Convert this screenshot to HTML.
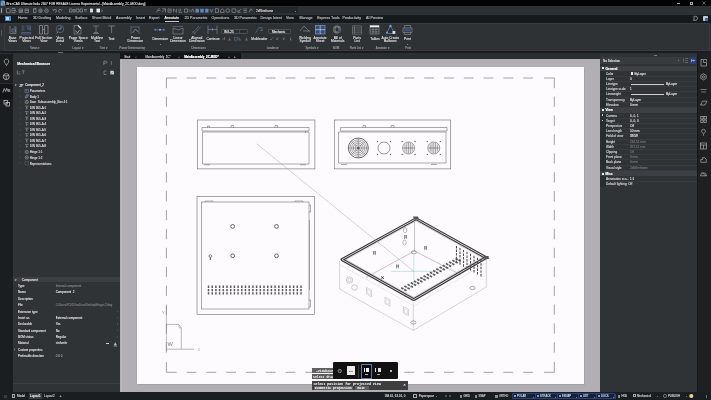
<!DOCTYPE html>
<html><head><meta charset="utf-8">
<style>
*{margin:0;padding:0;box-sizing:border-box}
html,body{width:711px;height:400px;overflow:hidden;background:#2e3134;font-family:"Liberation Sans",sans-serif;color:#c9cacc}
.a{position:absolute}
.t{position:absolute;white-space:nowrap;filter:blur(0.01px);text-shadow:0 0.28px 0 currentColor}
svg{position:absolute;left:0;top:0;overflow:visible}
</style></head><body>
<div class="a" style="left:0px;top:0px;width:711px;height:6px;background:#020303;"></div>
<div class="a" style="left:0px;top:6px;width:711px;height:8.5px;background:#2e3134;"></div>
<div class="a" style="left:0px;top:14.5px;width:711px;height:8px;background:#171a1c;"></div>
<div class="a" style="left:0px;top:22.5px;width:711px;height:28.5px;background:#2e3235;"></div>
<div class="a" style="left:0px;top:50.8px;width:711px;height:2.4px;background:#1a1d1f;"></div>
<div class="a" style="left:0px;top:53.5px;width:12.5px;height:338.5px;background:#1b1e1e;"></div>
<div class="a" style="left:9.5px;top:53.5px;width:3px;height:338.5px;background:#1c1d1f;"></div>
<div class="a" style="left:12.5px;top:53.5px;width:1px;height:338.5px;background:#36383b;"></div>
<div class="a" style="left:12.5px;top:53.5px;width:107.5px;height:338.5px;background:#2f3336;"></div>
<div class="a" style="left:120px;top:53.2px;width:577px;height:5.6px;background:#2b2e31;"></div>
<div class="a" style="left:120px;top:53.2px;width:121px;height:5.6px;background:#131517;"></div>
<div class="a" style="left:120px;top:59px;width:480px;height:333px;background:#b1aeb4;"></div>
<div class="a" style="left:135.5px;top:67.4px;width:1.5px;height:316px;background:#a9a6ab;"></div>
<div class="a" style="left:584px;top:68.5px;width:1.3px;height:316.5px;background:#a4a2a7;"></div>
<div class="a" style="left:138px;top:383.8px;width:447.3px;height:1.3px;background:#a4a2a7;"></div>
<div class="a" style="left:137px;top:67.4px;width:447px;height:316.4px;background:#fefbfe;"></div>
<div class="a" style="left:600px;top:53.5px;width:97px;height:338.5px;background:#2f3336;"></div>
<div class="a" style="left:697px;top:53.2px;width:14px;height:338.6px;background:#1e2022;"></div>
<div class="a" style="left:0px;top:391.8px;width:711px;height:8.2px;background:#1b1e20;"></div>
<svg width="711" height="400"><path d="M0.5 0.5h4.2l0.8 5.3h-5z" fill="#7ea3c8"/><path d="M1.5 1.5l2.5 3.5" stroke="#2d4f78" stroke-width="0.7"/></svg>
<div class="t" style="left:6.5px;top:2.90px;font-size:3.15px;line-height:3.15px;color:#d8d8d8;font-weight:normal;">BricsCAD Ultimate Italia 2507 FOR RESALE License Experimental - [MainAssembly_2C-MOD.dwg]</div>
<div class="a" style="left:676.5px;top:3px;width:3px;height:0.5px;background:#aaa;"></div>
<div class="a" style="left:689.5px;top:1.5px;width:3.2px;height:3.2px;border:0.5px solid #aaa;"></div>
<svg width="711" height="400"><path d="M702.5 1.5l3 3M705.5 1.5l-3 3" stroke="#bbb" stroke-width="0.5"/></svg>
<svg width="711" height="400"><g fill="none" stroke="#a9acb0" stroke-width="0.55"><rect x="1.2" y="8.3" width="0.6" height="4.5" fill="#a9acb0"/><path d="M6.5 8.5h2.5l1.2 1.2v3.1h-3.7z" /><path d="M12 8.5h3v4.3h-3zM13 10.5h2.5l1 1" /><path d="M19 9h3.5v3.5h-3.5zM19.5 10.5h2.5M19.5 11.5h2.5" /><path d="M25 9h3.5v3.5h-3.5zM25.5 10.5h2.5" /><path d="M33.5 8.5h2.5v4h-2.5zM34.3 9.5h1" /><circle cx="40.5" cy="10.7" r="1.8"/><circle cx="40.5" cy="10.7" r="0.8"/><circle cx="46.5" cy="10.7" r="1.8"/><path d="M45.5 10.7h2"/><path d="M53.5 10.5a1.5 1.5 0 1 1 1.5 1.8M53.5 10.5l-0.7 -1M53.5 10.5l1 -0.5" /><path d="M61.5 10.5a1.5 1.5 0 1 0 -1.5 1.8M61.5 10.5l0.7 -1" /><path d="M69.5 9h2.5v3h-2.5zM73 9.5h2v2.5h-2z" /><path d="M76 9h3v3h-3zM80 9h2.5v3h-2.5z" /><path d="M84 9.5h3M84 11h3" /></g><rect x="90" y="8.6" width="3" height="3.8" fill="#d9d9d9"/><rect x="96.5" y="8.6" width="3.5" height="3.8" fill="#f0f0f0"/><path d="M101.5 9.5l1 1.2-1 1.2" stroke="#aaa" stroke-width="0.5" fill="none"/></svg>
<svg width="711" height="400"><g fill="none" stroke="#a3a6aa" stroke-width="0.55"><path d="M156.5 12.3l2-3.5h1.5M158 10.5h2.5" /><path d="M162 12.3l3.5-3.5M162 8.8h3.5v3.5" /><path d="M168 9h3.2v3.2h-3.2zM169 10.5h1.5" /><path d="M173.5 12.3v-3.5l3 3.5v-3.5" /><path d="M179 8.8v3.5h3.2M180.5 8.8v2" /><path d="M184.5 9h3v3.2h-3zM188.5 9l1.5 1.5-1.5 1.5" /><path d="M191 12.3l1.6-3.5 1.6 3.5" /><rect x="215.5" y="8.8" width="3.2" height="3.6"/><path d="M220.5 12.4v-2l1.8-1.5 1.8 1.5v2z" /><circle cx="227.8" cy="10.6" r="1.8"/><rect x="232" y="8.8" width="3.8" height="3.6" rx="0.6"/><path d="M238 12.3l3-3.5M238 9.8v2.5h2.5" /><path d="M243.5 9h3.5M243.5 10.6h3.5M243.5 12.2h3.5" /><path d="M249 12.3l2-3.5 1.5 2" /></g><g fill="#5f86bf"><rect x="195.5" y="8.7" width="3.4" height="3.7" rx="0.5"/><rect x="200.3" y="8.7" width="3.4" height="3.7" rx="0.5"/><rect x="205.1" y="8.7" width="3.4" height="3.7" rx="0.5"/></g><path d="M210 9l1.5 3.3 1.5-3.3" stroke="#8fa5c8" stroke-width="0.55" fill="none"/></svg>
<div class="a" style="left:254.5px;top:7.4px;width:43px;height:5.9px;background:#24272a;border-radius:0.6px"></div>
<div class="t" style="left:256px;top:9.80px;font-size:3.0px;line-height:3.0px;color:#d2d2d2;font-weight:normal;">2dWireframe</div>
<div class="t" style="left:195px;width:200px;text-align:center;top:10.10px;font-size:2.3px;line-height:2.3px;color:#999;font-weight:normal;">▾</div>
<div class="t" style="left:18px;top:17.20px;font-size:3.6px;line-height:3.6px;color:#b2b4b7;font-weight:normal;">Home</div>
<div class="t" style="left:33px;top:17.20px;font-size:3.6px;line-height:3.6px;color:#b2b4b7;font-weight:normal;">3D Drafting</div>
<div class="t" style="left:56px;top:17.20px;font-size:3.6px;line-height:3.6px;color:#b2b4b7;font-weight:normal;">Modeling</div>
<div class="t" style="left:75px;top:17.20px;font-size:3.6px;line-height:3.6px;color:#b2b4b7;font-weight:normal;">Surface</div>
<div class="t" style="left:92px;top:17.20px;font-size:3.6px;line-height:3.6px;color:#b2b4b7;font-weight:normal;">Sheet Metal</div>
<div class="t" style="left:116px;top:17.20px;font-size:3.6px;line-height:3.6px;color:#b2b4b7;font-weight:normal;">Assembly</div>
<div class="t" style="left:136px;top:17.20px;font-size:3.6px;line-height:3.6px;color:#b2b4b7;font-weight:normal;">Insert</div>
<div class="t" style="left:149px;top:17.20px;font-size:3.6px;line-height:3.6px;color:#b2b4b7;font-weight:normal;">Export</div>
<div class="t" style="left:164.5px;top:17.20px;font-size:3.6px;line-height:3.6px;color:#ececec;font-weight:normal;">Annotate</div>
<div class="t" style="left:184.5px;top:17.20px;font-size:3.6px;line-height:3.6px;color:#b2b4b7;font-weight:normal;">2D Parametric</div>
<div class="t" style="left:211.6px;top:17.20px;font-size:3.6px;line-height:3.6px;color:#b2b4b7;font-weight:normal;">Operations</div>
<div class="t" style="left:234px;top:17.20px;font-size:3.6px;line-height:3.6px;color:#b2b4b7;font-weight:normal;">3D Parametric</div>
<div class="t" style="left:260.5px;top:17.20px;font-size:3.6px;line-height:3.6px;color:#b2b4b7;font-weight:normal;">Design Intent</div>
<div class="t" style="left:286px;top:17.20px;font-size:3.6px;line-height:3.6px;color:#b2b4b7;font-weight:normal;">View</div>
<div class="t" style="left:299.5px;top:17.20px;font-size:3.6px;line-height:3.6px;color:#b2b4b7;font-weight:normal;">Manage</div>
<div class="t" style="left:317.2px;top:17.20px;font-size:3.6px;line-height:3.6px;color:#b2b4b7;font-weight:normal;">Express Tools</div>
<div class="t" style="left:342.5px;top:17.20px;font-size:3.6px;line-height:3.6px;color:#b2b4b7;font-weight:normal;">Productivity</div>
<div class="t" style="left:366px;top:17.20px;font-size:3.6px;line-height:3.6px;color:#b2b4b7;font-weight:normal;">AI Preview</div>
<div class="a" style="left:164.5px;top:20.6px;width:14.5px;height:0.5px;background:#c8c8c8;"></div>
<div class="a" style="left:4.5px;top:15.5px;width:6px;height:5.8px;background:#4a86d0;"></div>
<div class="a" style="left:6px;top:17px;width:3px;height:2.8px;background:#b9d6f5;"></div>
<svg width="711" height="400"><path d="M694 16.3h1.5a2 2 0 0 1 0 4h-1.5zM693.2 20.3h1" fill="none" stroke="#cfcfcf" stroke-width="0.55"/></svg>
<div class="a" style="left:702.5px;top:15.8px;width:5.5px;height:5.5px;background:#c9c9c9;border-radius:0.8px"></div>
<div class="a" style="left:704.8px;top:18.1px;width:3.2px;height:3.2px;background:#2d6db5;"></div>
<div class="a" style="left:3.5px;top:22.5px;width:706px;height:28.3px;border:0.5px solid #383c40;border-radius:1px"></div>
<div class="a" style="left:1px;top:30px;width:0.6px;height:6px;background:#55595d;"></div>
<svg width="711" height="400"><g fill="none" stroke="#91959a" stroke-width="0.6"><path d="M10 26v7.5M10.5 33.5h5.5v-6.5h-2M12 29h3.5v3h-3.5z" stroke="#91959a"/><path d="M12.5 29.5h2.5v2h-2.5z" fill="#34507c" stroke="none"/><path d="M21.5 26h3M21.5 28h3M21.5 30h3M26 26h4.5v4.5M21.5 32.5h9v1.5h-9z" stroke="#5f7ba6"/><rect x="27" y="27" width="3" height="3" fill="#34507c" stroke="none"/><path d="M39.5 25.5h3v8.5h-3zM44.5 25.5h3.5v8.5h-3.5zM42.5 29.5h2" stroke="#a9adb2"/><circle cx="60" cy="29" r="3.7" stroke="#5f7ba6"/><path d="M58 29h3v-2.5M56.5 33.5l1.8-1.8" stroke="#a9adb2"/><path d="M74 25.5h4.5l2.5 2.5v6h-7z" stroke="#91959a"/><path d="M78 25.5l3 3" stroke="#e8e8e8" stroke-width="1.2"/><path d="M75.5 30.5l2 2.5 2-3" stroke="#d8d8d8"/><path d="M93 26h6M96 26v6.5M93 33.5h6M94 32.5h4" stroke="#91959a"/><path d="M108.3 26h6.7M111.6 26v7" stroke="#91959a" stroke-width="0.7"/><path d="M131 26v8M139 26v8M131 27h8" stroke="#5f7ba6"/><path d="M132.5 33l3-4 2.5 3" stroke="#a9adb2"/><path d="M154 29.8h11" stroke="#5f7ba6" stroke-width="0.8"/><path d="M154 29.8l2-1.2v2.4zM165 29.8l-2-1.2v2.4z" fill="#5f7ba6" stroke="none"/><circle cx="160" cy="29.8" r="1" fill="#8ab0e0" stroke="none"/><path d="M172.5 26.5h10.5" stroke="#5f7ba6"/><path d="M173 28v6h10v-6l-5 2z" stroke="#91959a"/><path d="M192 33.5l7-7.5M194 34l7-7.5M192.5 31l3 3" stroke="#5f7ba6"/><path d="M208 25.5v8.5M217 25.5v8.5M208 29.5h9M212.5 28v3" stroke="#7f95b8"/><path d="M255.5 33l3.5-5.5M259 27.5h3.5M260 29h3M260 30.5h3" stroke="#5f7ba6"/><path d="M300 31l4-5 5.5 5.5M303 31h7" stroke="#91959a"/><rect x="315.5" y="25.5" width="9.5" height="8.5" fill="#34507c" stroke="#8aa6d6"/><path d="M320.2 25.5v8.5M315.5 29.7h9.5" stroke="#d6e2f5"/><circle cx="337" cy="29.5" r="3.8" stroke="#91959a"/><path d="M335 27h4v5h-4z" stroke="#c9ccd0"/><circle cx="339.5" cy="31.5" r="1.5" fill="#34507c" stroke="none"/><path d="M352.5 25.8h9v8.4h-9zM352.5 27.9h9M352.5 30h9M352.5 32.1h9M354.5 25.8v8.4" stroke="#91959a" stroke-width="0.45"/><rect x="370" y="25.5" width="9" height="8.5" stroke="#91959a"/><rect x="370" y="25.5" width="9" height="1.8" fill="#f2f2f2" stroke="none"/><path d="M373 27.3v6.7M376 27.3v6.7M370 29.7h9M370 31.9h9" stroke="#91959a"/><path d="M390.5 25.5l-4 8M390.5 25.5l4 8M386.5 33.5h8" stroke="#5f7ba6" stroke-width="0.8"/><circle cx="390.5" cy="26" r="1.2" fill="#6da0e8" stroke="none"/><rect x="392.5" y="31" width="2.8" height="2.8" fill="#e0e0e0" stroke="none"/><circle cx="387" cy="32.5" r="1" fill="#6da0e8" stroke="none"/><path d="M404.5 28v-2.5h6v2.5M403 28h9v4.5h-9zM404.5 32.5v2h6v-2" stroke="#91959a"/><rect x="404" y="29" width="7" height="2.5" fill="#34507c" stroke="none"/><path d="M222.5 40l2-2.5M224.5 37.5v2.5M228 40h3M229.5 37.5v2.5M239 37.5v2.5h2M245 40h3M246.5 37.5v2.5" stroke="#91959a" stroke-width="0.5"/><rect x="234.5" y="37.3" width="2.8" height="2.8" stroke="#5f7ba6" stroke-width="0.5"/><path d="M270 39l1 1 1.8-2.5M277 40l1.5-2.5M276.8 37.5v2.5M283.5 40l1.5-2.5M283.3 37.5v2.5M290.5 37.5v2.5h1.5" stroke="#91959a" stroke-width="0.5"/></g></svg>
<div class="t" style="left:-87.5px;width:200px;text-align:center;top:36.50px;font-size:3.3px;line-height:3.3px;color:#d2d3d5;font-weight:normal;">Base</div>
<div class="t" style="left:-87.5px;width:200px;text-align:center;top:39.75px;font-size:3.3px;line-height:3.3px;color:#d2d3d5;font-weight:normal;">Views</div>
<div class="t" style="left:-73.5px;width:200px;text-align:center;top:36.50px;font-size:3.3px;line-height:3.3px;color:#d2d3d5;font-weight:normal;">Projected</div>
<div class="t" style="left:-73.5px;width:200px;text-align:center;top:39.75px;font-size:3.3px;line-height:3.3px;color:#d2d3d5;font-weight:normal;">Views</div>
<div class="t" style="left:-56.2px;width:200px;text-align:center;top:36.50px;font-size:3.3px;line-height:3.3px;color:#d2d3d5;font-weight:normal;">Full Section</div>
<div class="t" style="left:-56.2px;width:200px;text-align:center;top:39.75px;font-size:3.3px;line-height:3.3px;color:#d2d3d5;font-weight:normal;">View</div>
<div class="t" style="left:-40px;width:200px;text-align:center;top:36.50px;font-size:3.3px;line-height:3.3px;color:#d2d3d5;font-weight:normal;">View</div>
<div class="t" style="left:-40px;width:200px;text-align:center;top:39.75px;font-size:3.3px;line-height:3.3px;color:#d2d3d5;font-weight:normal;">Detail</div>
<div class="t" style="left:-21.799999999999997px;width:200px;text-align:center;top:36.50px;font-size:3.3px;line-height:3.3px;color:#d2d3d5;font-weight:normal;">Paper Space</div>
<div class="t" style="left:-21.799999999999997px;width:200px;text-align:center;top:39.75px;font-size:3.3px;line-height:3.3px;color:#d2d3d5;font-weight:normal;">Views</div>
<div class="t" style="left:-2.9000000000000057px;width:200px;text-align:center;top:36.50px;font-size:3.3px;line-height:3.3px;color:#d2d3d5;font-weight:normal;">Multiline</div>
<div class="t" style="left:-2.9000000000000057px;width:200px;text-align:center;top:39.75px;font-size:3.3px;line-height:3.3px;color:#d2d3d5;font-weight:normal;">Text</div>
<div class="t" style="left:11.5px;width:200px;text-align:center;top:37.90px;font-size:3.3px;line-height:3.3px;color:#d2d3d5;font-weight:normal;">Text</div>
<div class="t" style="left:35.400000000000006px;width:200px;text-align:center;top:36.50px;font-size:3.3px;line-height:3.3px;color:#d2d3d5;font-weight:normal;">Power</div>
<div class="t" style="left:35.400000000000006px;width:200px;text-align:center;top:39.75px;font-size:3.3px;line-height:3.3px;color:#d2d3d5;font-weight:normal;">Dimension</div>
<div class="t" style="left:60.19999999999999px;width:200px;text-align:center;top:37.90px;font-size:3.3px;line-height:3.3px;color:#d2d3d5;font-weight:normal;">Dimension</div>
<div class="t" style="left:78px;width:200px;text-align:center;top:36.50px;font-size:3.3px;line-height:3.3px;color:#d2d3d5;font-weight:normal;">Linear</div>
<div class="t" style="left:78px;width:200px;text-align:center;top:39.75px;font-size:3.3px;line-height:3.3px;color:#d2d3d5;font-weight:normal;">Dimension</div>
<div class="t" style="left:96.80000000000001px;width:200px;text-align:center;top:36.50px;font-size:3.3px;line-height:3.3px;color:#d2d3d5;font-weight:normal;">Aligned</div>
<div class="t" style="left:96.80000000000001px;width:200px;text-align:center;top:39.75px;font-size:3.3px;line-height:3.3px;color:#d2d3d5;font-weight:normal;">Dimension</div>
<div class="t" style="left:113px;width:200px;text-align:center;top:37.90px;font-size:3.3px;line-height:3.3px;color:#d2d3d5;font-weight:normal;">Continue</div>
<div class="t" style="left:159.3px;width:200px;text-align:center;top:37.90px;font-size:3.3px;line-height:3.3px;color:#d2d3d5;font-weight:normal;">Multileader</div>
<div class="t" style="left:205px;width:200px;text-align:center;top:36.50px;font-size:3.3px;line-height:3.3px;color:#d2d3d5;font-weight:normal;">Welding</div>
<div class="t" style="left:205px;width:200px;text-align:center;top:39.75px;font-size:3.3px;line-height:3.3px;color:#d2d3d5;font-weight:normal;">Symbol</div>
<div class="t" style="left:220.10000000000002px;width:200px;text-align:center;top:36.50px;font-size:3.3px;line-height:3.3px;color:#d2d3d5;font-weight:normal;">Annotate</div>
<div class="t" style="left:220.10000000000002px;width:200px;text-align:center;top:39.75px;font-size:3.3px;line-height:3.3px;color:#d2d3d5;font-weight:normal;">Sheet</div>
<div class="t" style="left:237.7px;width:200px;text-align:center;top:36.50px;font-size:3.3px;line-height:3.3px;color:#d2d3d5;font-weight:normal;">Bill of</div>
<div class="t" style="left:237.7px;width:200px;text-align:center;top:39.75px;font-size:3.3px;line-height:3.3px;color:#d2d3d5;font-weight:normal;">Materials</div>
<div class="t" style="left:257px;width:200px;text-align:center;top:36.50px;font-size:3.3px;line-height:3.3px;color:#d2d3d5;font-weight:normal;">Parts</div>
<div class="t" style="left:257px;width:200px;text-align:center;top:39.75px;font-size:3.3px;line-height:3.3px;color:#d2d3d5;font-weight:normal;">List</div>
<div class="t" style="left:275px;width:200px;text-align:center;top:37.90px;font-size:3.3px;line-height:3.3px;color:#d2d3d5;font-weight:normal;">Tables</div>
<div class="t" style="left:290.3px;width:200px;text-align:center;top:36.50px;font-size:3.3px;line-height:3.3px;color:#d2d3d5;font-weight:normal;">Auto Create</div>
<div class="t" style="left:290.3px;width:200px;text-align:center;top:39.75px;font-size:3.3px;line-height:3.3px;color:#d2d3d5;font-weight:normal;">Balloons</div>
<div class="t" style="left:307.4px;width:200px;text-align:center;top:37.90px;font-size:3.3px;line-height:3.3px;color:#d2d3d5;font-weight:normal;">Print</div>
<div class="a" style="left:220.6px;top:28.8px;width:27px;height:5.4px;background:#2a2d31;border:0.5px solid #4d5157;border-radius:1.2px"></div>
<div class="a" style="left:239px;top:29.3px;width:0.4px;height:4.4px;background:#4d5157;"></div>
<div class="t" style="left:223.8px;top:30.70px;font-size:3.1px;line-height:3.1px;color:#e0e0e0;font-weight:normal;">ISO-25</div>
<div class="a" style="left:268px;top:28.8px;width:22.5px;height:5.4px;background:#2a2d31;border:0.5px solid #4d5157;border-radius:1.2px"></div>
<div class="t" style="left:272px;top:30.70px;font-size:3.1px;line-height:3.1px;color:#e0e0e0;font-weight:normal;">Mechanic</div>
<div class="t" style="left:-64.8px;width:200px;text-align:center;top:48.20px;font-size:2.75px;line-height:2.75px;color:#929497;font-weight:normal;">Views ▾</div>
<div class="t" style="left:-22px;width:200px;text-align:center;top:48.20px;font-size:2.75px;line-height:2.75px;color:#929497;font-weight:normal;">Layout ▾</div>
<div class="t" style="left:4px;width:200px;text-align:center;top:48.20px;font-size:2.75px;line-height:2.75px;color:#929497;font-weight:normal;">Text ▾</div>
<div class="t" style="left:32.19999999999999px;width:200px;text-align:center;top:48.20px;font-size:2.75px;line-height:2.75px;color:#929497;font-weight:normal;">Power Dimensioning</div>
<div class="t" style="left:98.6px;width:200px;text-align:center;top:48.20px;font-size:2.75px;line-height:2.75px;color:#929497;font-weight:normal;">Dimensions</div>
<div class="t" style="left:173px;width:200px;text-align:center;top:48.20px;font-size:2.75px;line-height:2.75px;color:#929497;font-weight:normal;">Leaders ▾</div>
<div class="t" style="left:212.2px;width:200px;text-align:center;top:48.20px;font-size:2.75px;line-height:2.75px;color:#929497;font-weight:normal;">Symbols ▾</div>
<div class="t" style="left:236.2px;width:200px;text-align:center;top:48.20px;font-size:2.75px;line-height:2.75px;color:#929497;font-weight:normal;">BOM</div>
<div class="t" style="left:256.8px;width:200px;text-align:center;top:48.20px;font-size:2.75px;line-height:2.75px;color:#929497;font-weight:normal;">Parts List ▾</div>
<div class="t" style="left:282.7px;width:200px;text-align:center;top:48.20px;font-size:2.75px;line-height:2.75px;color:#929497;font-weight:normal;">Annotate ▾</div>
<div class="t" style="left:308.2px;width:200px;text-align:center;top:48.20px;font-size:2.75px;line-height:2.75px;color:#929497;font-weight:normal;">Print</div>
<div class="t" style="left:-40px;width:200px;text-align:center;top:43.00px;font-size:2.3px;line-height:2.3px;color:#9c9ea1;font-weight:normal;">▾</div>
<div class="t" style="left:-21.799999999999997px;width:200px;text-align:center;top:43.00px;font-size:2.3px;line-height:2.3px;color:#9c9ea1;font-weight:normal;">▾</div>
<div class="t" style="left:60.19999999999999px;width:200px;text-align:center;top:43.00px;font-size:2.3px;line-height:2.3px;color:#9c9ea1;font-weight:normal;">▾</div>
<div class="t" style="left:307.4px;width:200px;text-align:center;top:43.00px;font-size:2.3px;line-height:2.3px;color:#9c9ea1;font-weight:normal;">▾</div>
<div class="a" style="left:58px;top:52.2px;width:5px;height:0.6px;background:#6a6d70;"></div>
<div class="t" style="left:124.3px;top:55.60px;font-size:2.9px;line-height:2.9px;color:#c4c4c4;font-weight:normal;">Start</div>
<div class="t" style="left:36px;width:200px;text-align:center;top:55.90px;font-size:2.3px;line-height:2.3px;color:#aaa;font-weight:normal;">✕</div>
<div class="t" style="left:145.4px;top:55.60px;font-size:2.9px;line-height:2.9px;color:#c4c4c4;font-weight:normal;">MainAssembly_2C*</div>
<div class="t" style="left:78.5px;width:200px;text-align:center;top:55.90px;font-size:2.3px;line-height:2.3px;color:#aaa;font-weight:normal;">✕</div>
<div class="t" style="left:184.2px;top:55.60px;font-size:2.9px;line-height:2.9px;color:#ffffff;font-weight:bold;">MainAssembly_2C-MOD*</div>
<div class="t" style="left:129px;width:200px;text-align:center;top:55.90px;font-size:2.3px;line-height:2.3px;color:#ddd;font-weight:normal;">✕</div>
<div class="t" style="left:135px;width:200px;text-align:center;top:55.60px;font-size:3.0px;line-height:3.0px;color:#ccc;font-weight:normal;">+</div>
<div class="a" style="left:121px;top:59px;width:1.2px;height:333px;background:#bab7bd;"></div>
<div class="a" style="left:0px;top:83.5px;width:12.5px;height:15.5px;background:#121415;"></div>
<div class="a" style="left:0px;top:82.8px;width:12.5px;height:0.6px;background:#2a2c2f;"></div>
<svg width="711" height="400" style="position:absolute;left:0;top:0">
<g fill="none" stroke="#c8cacc" stroke-width="0.7">
<path d="M4.2 61.5a2.3 2.3 0 1 1 3.6 1.8l-1.3 2.2-1.3-2.2a2.3 2.3 0 0 1-1-1.8z"/>
<circle cx="6.2" cy="76.6" r="3"/><path d="M3.4 75.8h5.6M6.2 76.6v3"/>
<path d="M2.8 92.5l1.5-4 1.3 3 1.2-3.2 1.3 3.2M8 92l2.2-3M8 89l2.2 3"/>
<rect x="4" y="100.5" width="3.5" height="3.5"/><rect x="6" y="102.5" width="3.5" height="3.5"/>
</g></svg>
<div class="t" style="left:17.3px;top:63.20px;font-size:3.4px;line-height:3.4px;color:#e4e4e4;font-weight:bold;">Mechanical Browser</div>
<svg width="711" height="400"><g fill="none" stroke="#a4a7aa" stroke-width="0.55"><path d="M103.8 65v-3.8h2a1 1 0 0 1 0 2h-2"/><path d="M111.3 61v4"/><path d="M106.5 71h-2.5v3.5h2.5"/><path d="M17.3 70.5v3.5h3M18.5 72h1.5M22 70.8h2.6M23.3 70.8v3.4"/></g><rect x="110.3" y="70.8" width="3.6" height="3.6" fill="#d8d8d8"/><path d="M110.8 74l2.6-2.6" stroke="#555" stroke-width="0.5"/></svg>
<div class="t" style="left:25.2px;top:84.40px;font-size:3.0px;line-height:3.0px;color:#e0e0e0;font-weight:normal;">Component_2</div>
<div class="t" style="left:29.7px;top:90.20px;font-size:3.0px;line-height:3.0px;color:#cfcfcf;font-weight:normal;">Parameters</div>
<div class="t" style="left:29.7px;top:95.50px;font-size:3.0px;line-height:3.0px;color:#cfcfcf;font-weight:normal;">Body 1</div>
<div class="t" style="left:29.7px;top:101.20px;font-size:3.0px;line-height:3.0px;color:#cfcfcf;font-weight:normal;">Door_Subassembly_Box 4:1</div>
<div class="t" style="left:29.7px;top:106.90px;font-size:3.0px;line-height:3.0px;color:#cfcfcf;font-weight:normal;">DIN 965-A:1</div>
<div class="t" style="left:29.7px;top:112.40px;font-size:3.0px;line-height:3.0px;color:#cfcfcf;font-weight:normal;">DIN 965-A:2</div>
<div class="t" style="left:29.7px;top:117.90px;font-size:3.0px;line-height:3.0px;color:#cfcfcf;font-weight:normal;">DIN 965-A:3</div>
<div class="t" style="left:29.7px;top:123.40px;font-size:3.0px;line-height:3.0px;color:#cfcfcf;font-weight:normal;">DIN 965-A:4</div>
<div class="t" style="left:29.7px;top:128.90px;font-size:3.0px;line-height:3.0px;color:#cfcfcf;font-weight:normal;">DIN 965-A:5</div>
<div class="t" style="left:29.7px;top:134.40px;font-size:3.0px;line-height:3.0px;color:#cfcfcf;font-weight:normal;">DIN 965-A:6</div>
<div class="t" style="left:29.7px;top:139.90px;font-size:3.0px;line-height:3.0px;color:#cfcfcf;font-weight:normal;">DIN 965-A:7</div>
<div class="t" style="left:29.7px;top:145.40px;font-size:3.0px;line-height:3.0px;color:#cfcfcf;font-weight:normal;">DIN 965-A:8</div>
<div class="t" style="left:29.7px;top:151.20px;font-size:3.0px;line-height:3.0px;color:#cfcfcf;font-weight:normal;">Hinge 1:1</div>
<div class="t" style="left:29.7px;top:156.70px;font-size:3.0px;line-height:3.0px;color:#cfcfcf;font-weight:normal;">Hinge 1:2</div>
<div class="t" style="left:29.7px;top:162.50px;font-size:3.0px;line-height:3.0px;color:#cfcfcf;font-weight:normal;">Representations</div>
<svg width="711" height="400"><rect x="19.6" y="90.2" width="1.5" height="1.5" fill="#404347"/><path d="M25 89.4h3.5v3.2h-3.5zM26 90.6h1.5" stroke="#7d8fb8" stroke-width="0.55" fill="none"/><rect x="19.6" y="95.5" width="1.5" height="1.5" fill="#404347"/><path d="M25 97.8l1.5-3h2l-1.5 3z" stroke="#8c9cc4" stroke-width="0.6" fill="#3b4c74"/><rect x="19.6" y="101.2" width="1.5" height="1.5" fill="#404347"/><circle cx="26.75" cy="102" r="1.6" stroke="#b5b8bb" stroke-width="0.55" fill="none"/><path d="M26 102h1.5" stroke="#b5b8bb" stroke-width="0.5"/><rect x="19.6" y="106.9" width="1.5" height="1.5" fill="#404347"/><path d="M25 106.10000000000001h3.5M26.75 106.10000000000001v3.4M25.9 107.9h1.7" stroke="#a0a3a6" stroke-width="0.55" fill="none"/><rect x="19.6" y="112.4" width="1.5" height="1.5" fill="#404347"/><path d="M25 111.60000000000001h3.5M26.75 111.60000000000001v3.4M25.9 113.4h1.7" stroke="#a0a3a6" stroke-width="0.55" fill="none"/><rect x="19.6" y="117.9" width="1.5" height="1.5" fill="#404347"/><path d="M25 117.10000000000001h3.5M26.75 117.10000000000001v3.4M25.9 118.9h1.7" stroke="#a0a3a6" stroke-width="0.55" fill="none"/><rect x="19.6" y="123.4" width="1.5" height="1.5" fill="#404347"/><path d="M25 122.60000000000001h3.5M26.75 122.60000000000001v3.4M25.9 124.4h1.7" stroke="#a0a3a6" stroke-width="0.55" fill="none"/><rect x="19.6" y="128.89999999999998" width="1.5" height="1.5" fill="#404347"/><path d="M25 128.1h3.5M26.75 128.1v3.4M25.9 129.89999999999998h1.7" stroke="#a0a3a6" stroke-width="0.55" fill="none"/><rect x="19.6" y="134.39999999999998" width="1.5" height="1.5" fill="#404347"/><path d="M25 133.6h3.5M26.75 133.6v3.4M25.9 135.39999999999998h1.7" stroke="#a0a3a6" stroke-width="0.55" fill="none"/><rect x="19.6" y="139.89999999999998" width="1.5" height="1.5" fill="#404347"/><path d="M25 139.1h3.5M26.75 139.1v3.4M25.9 140.89999999999998h1.7" stroke="#a0a3a6" stroke-width="0.55" fill="none"/><rect x="19.6" y="145.39999999999998" width="1.5" height="1.5" fill="#404347"/><path d="M25 144.6h3.5M26.75 144.6v3.4M25.9 146.39999999999998h1.7" stroke="#a0a3a6" stroke-width="0.55" fill="none"/><rect x="19.6" y="151.2" width="1.5" height="1.5" fill="#404347"/><circle cx="26.75" cy="152" r="1.6" stroke="#b5b8bb" stroke-width="0.55" fill="none"/><path d="M26 152h1.5" stroke="#b5b8bb" stroke-width="0.5"/><rect x="19.6" y="156.7" width="1.5" height="1.5" fill="#404347"/><circle cx="26.75" cy="157.5" r="1.6" stroke="#b5b8bb" stroke-width="0.55" fill="none"/><path d="M26 157.5h1.5" stroke="#b5b8bb" stroke-width="0.5"/><rect x="19.6" y="162.5" width="1.5" height="1.5" fill="#404347"/><path d="M25 161.70000000000002h3.5v3.2h-3.5z" stroke="#8f9295" stroke-width="0.5" stroke-dasharray="0.6 0.5" fill="none"/><path d="M18.8 87l2-3h3l-2 3z" fill="#9ea1a4"/><path d="M19.5 84.5h3" stroke="#ddd" stroke-width="0.5"/></svg>
<div class="t" style="left:-84.5px;width:200px;text-align:center;top:85.40px;font-size:2.6px;line-height:2.6px;color:#aaa;font-weight:normal;">▾</div>
<div class="a" style="left:12.5px;top:276.7px;width:107.5px;height:5.5px;background:#3b3e43;"></div>
<div class="t" style="left:-84px;width:200px;text-align:center;top:279.70px;font-size:2.6px;line-height:2.6px;color:#aaa;font-weight:normal;">▾</div>
<div class="t" style="left:21.8px;top:278.70px;font-size:3.1px;line-height:3.1px;color:#d8d8d8;font-weight:normal;">Component</div>
<div class="t" style="left:17.9px;top:285.10px;font-size:3.0px;line-height:3.0px;color:#d4d5d7;font-weight:normal;">Type</div>
<div class="t" style="left:55.7px;top:285.10px;font-size:3.0px;line-height:3.0px;color:#7a7c7f;font-weight:normal;">Internal component</div>
<div class="t" style="left:17.9px;top:291.47px;font-size:3.0px;line-height:3.0px;color:#d4d5d7;font-weight:normal;">Name</div>
<div class="t" style="left:55.7px;top:291.47px;font-size:3.0px;line-height:3.0px;color:#dedede;font-weight:normal;">Component_2</div>
<div class="t" style="left:17.9px;top:297.84px;font-size:3.0px;line-height:3.0px;color:#d4d5d7;font-weight:normal;">Description</div>
<div class="t" style="left:17.9px;top:304.21px;font-size:3.0px;line-height:3.0px;color:#d4d5d7;font-weight:normal;">File</div>
<div class="t" style="left:55.7px;top:305.21px;font-size:2.65px;line-height:2.65px;color:#75777a;font-weight:normal;">C:\Users\PC01\OneDrive\Desktop\Hinges 2.dwg</div>
<div class="t" style="left:17.9px;top:310.58px;font-size:3.0px;line-height:3.0px;color:#d4d5d7;font-weight:normal;">Extension type</div>
<div class="a" style="left:116.5px;top:310.58px;width:1.5px;height:1.5px;background:#4a4d51;"></div>
<div class="t" style="left:17.9px;top:316.95px;font-size:3.0px;line-height:3.0px;color:#d4d5d7;font-weight:normal;">Insert as</div>
<div class="t" style="left:55.7px;top:316.95px;font-size:3.0px;line-height:3.0px;color:#d8d8d8;font-weight:normal;">External component</div>
<div class="a" style="left:116.5px;top:316.95px;width:1.5px;height:1.5px;background:#4a4d51;"></div>
<div class="t" style="left:17.9px;top:323.32px;font-size:3.0px;line-height:3.0px;color:#d4d5d7;font-weight:normal;">Declarable</div>
<div class="t" style="left:55.7px;top:323.32px;font-size:3.0px;line-height:3.0px;color:#d8d8d8;font-weight:normal;">Yes</div>
<div class="a" style="left:116.5px;top:323.32px;width:1.5px;height:1.5px;background:#4a4d51;"></div>
<div class="t" style="left:17.9px;top:329.69px;font-size:3.0px;line-height:3.0px;color:#d4d5d7;font-weight:normal;">Standard component</div>
<div class="t" style="left:55.7px;top:329.69px;font-size:3.0px;line-height:3.0px;color:#d8d8d8;font-weight:normal;">No</div>
<div class="a" style="left:116.5px;top:329.69px;width:1.5px;height:1.5px;background:#4a4d51;"></div>
<div class="t" style="left:17.9px;top:336.06px;font-size:3.0px;line-height:3.0px;color:#d4d5d7;font-weight:normal;">BOM status</div>
<div class="t" style="left:55.7px;top:336.06px;font-size:3.0px;line-height:3.0px;color:#d8d8d8;font-weight:normal;">Regular</div>
<div class="a" style="left:116.5px;top:336.05999999999995px;width:1.5px;height:1.5px;background:#4a4d51;"></div>
<div class="t" style="left:17.9px;top:342.43px;font-size:3.0px;line-height:3.0px;color:#d4d5d7;font-weight:normal;">Material</div>
<div class="t" style="left:55.7px;top:342.43px;font-size:3.0px;line-height:3.0px;color:#d8d8d8;font-weight:normal;">&lt;inherit&gt;</div>
<div class="t" style="left:17.9px;top:348.80px;font-size:3.0px;line-height:3.0px;color:#d4d5d7;font-weight:normal;">Custom properties</div>
<div class="t" style="left:17.9px;top:355.17px;font-size:3.0px;line-height:3.0px;color:#d4d5d7;font-weight:normal;">Preferable direction</div>
<div class="t" style="left:55.7px;top:355.17px;font-size:3.0px;line-height:3.0px;color:#9a9a9a;font-weight:normal;">0 0 0</div>
<div class="t" style="left:-85.5px;width:200px;text-align:center;top:348.90px;font-size:3.2px;line-height:3.2px;color:#aaa;font-weight:normal;">›</div>
<div class="a" style="left:106px;top:343px;width:3px;height:0.7px;background:#d0d0d0;"></div>
<svg width="711" height="400"><path d="M113.5 345.5l1.8-3.2 1.8 3.2z" fill="#b5b7b9"/><rect x="113.5" y="346.3" width="3.6" height="0.6" fill="#888"/></svg>
<div class="a" style="left:12.5px;top:383px;width:107.5px;height:0.5px;background:#3a3d41;"></div>
<div class="a" style="left:600px;top:56.8px;width:97px;height:7.1px;background:#34373b;"></div>
<div class="a" style="left:601px;top:57px;width:80.5px;height:6.7px;background:#383b3f;"></div>
<div class="t" style="left:603px;top:59.80px;font-size:3.0px;line-height:3.0px;color:#dcdcdc;font-weight:normal;">No Selection</div>
<div class="t" style="left:578.5px;width:200px;text-align:center;top:60.10px;font-size:2.4px;line-height:2.4px;color:#999;font-weight:normal;">▾</div>
<svg width="711" height="400"><path d="M683.5 58.5v4M685 58.5h3M685 60.5h3M685 62.5h3" stroke="#8a8d90" stroke-width="0.5"/></svg>
<div class="a" style="left:690px;top:57.3px;width:6px;height:6.3px;background:#2c3f7a;"></div>
<svg width="711" height="400"><path d="M691.5 60.5h3M693.5 59.3l1.2 1.2-1.2 1.2M691.5 59v3" stroke="#e8e8e8" stroke-width="0.5" fill="none"/></svg>
<div class="a" style="left:600px;top:64.2px;width:6.3px;height:122.5px;background:#2a2d30;"></div>
<div class="a" style="left:654px;top:55.3px;width:3px;height:0.5px;background:#77797c;"></div>
<div class="a" style="left:600px;top:65.89999999999999px;width:97px;height:5.0px;background:#3c3f43;"></div>
<div class="a" style="left:601.8px;top:67.39999999999999px;width:1.8px;height:1.8px;background:#e8e8e8;"></div>
<div class="t" style="left:605.5px;top:67.50px;font-size:3.2px;line-height:3.2px;color:#eeeeee;font-weight:bold;">General</div>
<div class="a" style="left:606.3px;top:75.7px;width:90.7px;height:0.4px;background:#383b3f;"></div>
<div class="t" style="left:606px;top:72.50px;font-size:3.1px;line-height:3.1px;color:#c8c9cb;font-weight:normal;">Color</div>
<div class="a" style="left:606.3px;top:80.80000000000001px;width:90.7px;height:0.4px;background:#383b3f;"></div>
<div class="t" style="left:606px;top:77.60px;font-size:3.1px;line-height:3.1px;color:#c8c9cb;font-weight:normal;">Layer</div>
<div class="t" style="left:630px;top:77.60px;font-size:3.1px;line-height:3.1px;color:#d6d6d6;font-weight:normal;">0</div>
<div class="a" style="left:606.3px;top:86.10000000000001px;width:90.7px;height:0.4px;background:#383b3f;"></div>
<div class="t" style="left:606px;top:82.90px;font-size:3.1px;line-height:3.1px;color:#c8c9cb;font-weight:normal;">Linetype</div>
<div class="a" style="left:606.3px;top:91.4px;width:90.7px;height:0.4px;background:#383b3f;"></div>
<div class="t" style="left:606px;top:88.20px;font-size:3.1px;line-height:3.1px;color:#c8c9cb;font-weight:normal;">Linetype scale</div>
<div class="t" style="left:630px;top:88.20px;font-size:3.1px;line-height:3.1px;color:#d6d6d6;font-weight:normal;">1</div>
<div class="a" style="left:606.3px;top:96.60000000000001px;width:90.7px;height:0.4px;background:#383b3f;"></div>
<div class="t" style="left:606px;top:93.40px;font-size:3.1px;line-height:3.1px;color:#c8c9cb;font-weight:normal;">Lineweight</div>
<div class="a" style="left:606.3px;top:101.9px;width:90.7px;height:0.4px;background:#383b3f;"></div>
<div class="t" style="left:606px;top:98.70px;font-size:3.1px;line-height:3.1px;color:#c8c9cb;font-weight:normal;">Transparency</div>
<div class="t" style="left:630px;top:98.70px;font-size:3.1px;line-height:3.1px;color:#d6d6d6;font-weight:normal;">ByLayer</div>
<div class="a" style="left:606.3px;top:107.2px;width:90.7px;height:0.4px;background:#383b3f;"></div>
<div class="t" style="left:606px;top:104.00px;font-size:3.1px;line-height:3.1px;color:#c8c9cb;font-weight:normal;">Elevation</div>
<div class="t" style="left:630px;top:104.00px;font-size:3.1px;line-height:3.1px;color:#d6d6d6;font-weight:normal;">0 mm</div>
<div class="a" style="left:630.5px;top:72px;width:2.6px;height:2.6px;background:#eeeeee;"></div>
<div class="t" style="left:634.5px;top:72.50px;font-size:3.1px;line-height:3.1px;color:#d6d6d6;font-weight:normal;">ByLayer</div>
<div class="a" style="left:630.5px;top:83.6px;width:33px;height:0.5px;background:#cfcfcf;"></div>
<div class="t" style="left:666px;top:82.90px;font-size:3.1px;line-height:3.1px;color:#d6d6d6;font-weight:normal;">ByLayer</div>
<div class="a" style="left:630.5px;top:94.1px;width:33px;height:0.5px;background:#cfcfcf;"></div>
<div class="t" style="left:666px;top:93.40px;font-size:3.1px;line-height:3.1px;color:#d6d6d6;font-weight:normal;">ByLayer</div>
<div class="a" style="left:600px;top:107.6px;width:97px;height:5.0px;background:#3c3f43;"></div>
<div class="a" style="left:601.8px;top:109.1px;width:1.8px;height:1.8px;background:#e8e8e8;"></div>
<div class="t" style="left:605.5px;top:109.20px;font-size:3.2px;line-height:3.2px;color:#eeeeee;font-weight:bold;">View</div>
<div class="a" style="left:606.3px;top:117.7px;width:90.7px;height:0.4px;background:#383b3f;"></div>
<div class="t" style="left:606px;top:114.50px;font-size:3.1px;line-height:3.1px;color:#c8c9cb;font-weight:normal;">Camera</div>
<div class="t" style="left:630px;top:114.50px;font-size:3.1px;line-height:3.1px;color:#d6d6d6;font-weight:normal;">0, 0, 1</div>
<div class="a" style="left:606.3px;top:122.92px;width:90.7px;height:0.4px;background:#383b3f;"></div>
<div class="t" style="left:606px;top:119.72px;font-size:3.1px;line-height:3.1px;color:#c8c9cb;font-weight:normal;">Target</div>
<div class="t" style="left:630px;top:119.72px;font-size:3.1px;line-height:3.1px;color:#d6d6d6;font-weight:normal;">0, 0, 0</div>
<div class="a" style="left:606.3px;top:128.14px;width:90.7px;height:0.4px;background:#383b3f;"></div>
<div class="t" style="left:606px;top:124.94px;font-size:3.1px;line-height:3.1px;color:#c8c9cb;font-weight:normal;">Perspective</div>
<div class="t" style="left:630px;top:124.94px;font-size:3.1px;line-height:3.1px;color:#d6d6d6;font-weight:normal;">Off</div>
<div class="a" style="left:606.3px;top:133.36px;width:90.7px;height:0.4px;background:#383b3f;"></div>
<div class="t" style="left:606px;top:130.16px;font-size:3.1px;line-height:3.1px;color:#c8c9cb;font-weight:normal;">Lens length</div>
<div class="t" style="left:630px;top:130.16px;font-size:3.1px;line-height:3.1px;color:#d6d6d6;font-weight:normal;">50 mm</div>
<div class="a" style="left:606.3px;top:138.58px;width:90.7px;height:0.4px;background:#383b3f;"></div>
<div class="t" style="left:606px;top:135.38px;font-size:3.1px;line-height:3.1px;color:#c8c9cb;font-weight:normal;">Field of view</div>
<div class="t" style="left:630px;top:135.38px;font-size:3.1px;line-height:3.1px;color:#e6e6e6;font-weight:normal;">39.59</div>
<div class="a" style="left:606.3px;top:143.8px;width:90.7px;height:0.4px;background:#383b3f;"></div>
<div class="t" style="left:606px;top:140.60px;font-size:3.1px;line-height:3.1px;color:#c8c9cb;font-weight:normal;">Height</div>
<div class="t" style="left:630px;top:140.60px;font-size:3.1px;line-height:3.1px;color:#6f7174;font-weight:normal;">263.51 mm</div>
<div class="a" style="left:606.3px;top:149.02px;width:90.7px;height:0.4px;background:#383b3f;"></div>
<div class="t" style="left:606px;top:145.82px;font-size:3.1px;line-height:3.1px;color:#c8c9cb;font-weight:normal;">Width</div>
<div class="t" style="left:630px;top:145.82px;font-size:3.1px;line-height:3.1px;color:#6f7174;font-weight:normal;">371.11 mm</div>
<div class="a" style="left:606.3px;top:154.24px;width:90.7px;height:0.4px;background:#383b3f;"></div>
<div class="t" style="left:606px;top:151.04px;font-size:3.1px;line-height:3.1px;color:#c8c9cb;font-weight:normal;">Clipping</div>
<div class="t" style="left:630px;top:151.04px;font-size:3.1px;line-height:3.1px;color:#6f7174;font-weight:normal;">Off</div>
<div class="a" style="left:606.3px;top:159.46px;width:90.7px;height:0.4px;background:#383b3f;"></div>
<div class="t" style="left:606px;top:156.26px;font-size:3.1px;line-height:3.1px;color:#c8c9cb;font-weight:normal;">Front plane</div>
<div class="t" style="left:630px;top:156.26px;font-size:3.1px;line-height:3.1px;color:#6f7174;font-weight:normal;">0 mm</div>
<div class="a" style="left:606.3px;top:164.68px;width:90.7px;height:0.4px;background:#383b3f;"></div>
<div class="t" style="left:606px;top:161.48px;font-size:3.1px;line-height:3.1px;color:#c8c9cb;font-weight:normal;">Back plane</div>
<div class="t" style="left:630px;top:161.48px;font-size:3.1px;line-height:3.1px;color:#6f7174;font-weight:normal;">0 mm</div>
<div class="a" style="left:606.3px;top:169.9px;width:90.7px;height:0.4px;background:#383b3f;"></div>
<div class="t" style="left:606px;top:166.70px;font-size:3.1px;line-height:3.1px;color:#c8c9cb;font-weight:normal;">Visual style</div>
<div class="t" style="left:630px;top:166.70px;font-size:3.1px;line-height:3.1px;color:#6f7174;font-weight:normal;">2dWireframe</div>
<div class="a" style="left:601.5px;top:114.4px;width:1.8px;height:1.8px;background:#cfcfcf;"></div>
<div class="a" style="left:601.5px;top:119.6px;width:1.8px;height:1.8px;background:#cfcfcf;"></div>
<div class="a" style="left:600px;top:171.4px;width:97px;height:5.0px;background:#3c3f43;"></div>
<div class="a" style="left:601.8px;top:172.9px;width:1.8px;height:1.8px;background:#e8e8e8;"></div>
<div class="t" style="left:605.5px;top:173.00px;font-size:3.2px;line-height:3.2px;color:#eeeeee;font-weight:bold;">Misc</div>
<div class="a" style="left:606.3px;top:181.3px;width:90.7px;height:0.4px;background:#383b3f;"></div>
<div class="t" style="left:606px;top:178.10px;font-size:3.1px;line-height:3.1px;color:#c8c9cb;font-weight:normal;">Annotation sca...</div>
<div class="t" style="left:630px;top:178.10px;font-size:3.1px;line-height:3.1px;color:#d6d6d6;font-weight:normal;">1:1</div>
<div class="t" style="left:606px;top:183.30px;font-size:3.1px;line-height:3.1px;color:#c8c9cb;font-weight:normal;">Default lighting: Off</div>
<div class="a" style="left:697px;top:53.5px;width:0.6px;height:338.5px;background:#141617;"></div>
<svg width="711" height="400"><g fill="none" stroke="#c3c5c8" stroke-width="0.6">
<path d="M701 59.5h2.5v3h3v3.5h-5.5zM704 59.5h2.5v2"/>
<path d="M700.8 75.3l2.7-1.6 2.7 1.6v3l-2.7 1.6-2.7-1.6z"/><circle cx="703.5" cy="76.8" r="1.1"/>
<path d="M700.5 89.5h6M701 92h5" stroke-width="0.5"/>
<path d="M700.5 105l2-3.8h4.5l-2 3.8z"/>
<rect x="700.8" y="116.5" width="2.3" height="2.5"/><rect x="704" y="116.5" width="2.3" height="2.5"/><rect x="700.8" y="120" width="2.3" height="2.5"/><rect x="704" y="120" width="2.3" height="2.5"/>
<path d="M701.6 131.2a1.9 1.9 0 1 1 3.8 0c0 1.1-1.9 2.8-1.9 2.8s-1.9-1.7-1.9-2.8zM703.5 134v1.8"/>
<rect x="700.6" y="143" width="5.8" height="6"/><path d="M700.6 145h5.8M703.5 145v4"/>
<path d="M700.8 162.3h5.5v-3l-1.6-1.6h-2.2v1.8h-1.7z"/>
<path d="M700.5 175.8a3 3 0 0 1 6 0zM702 172.3l3.5 3.5"/>
</g></svg>
<svg width="711" height="400"><g fill="none" stroke-linecap="butt"><path d="M166.4 88.2V78H176.6M554.3 88.2V78H544.1M166.4 362V372.3H176.6M554.3 362V372.3H544.1" stroke="#8a8a8a" stroke-width="0.8"/><path d="M186.60 78h9.8M206.40 78h9.8M226.20 78h9.8M246.00 78h9.8M265.80 78h9.8M285.60 78h9.8M305.40 78h9.8M325.20 78h9.8M345.00 78h9.8M364.80 78h9.8M384.60 78h9.8M404.40 78h9.8M424.20 78h9.8M444.00 78h9.8M463.80 78h9.8M483.60 78h9.8M503.40 78h9.8M523.20 78h9.8M186.60 372.3h9.8M206.40 372.3h9.8M226.20 372.3h9.8M246.00 372.3h9.8M265.80 372.3h9.8M285.60 372.3h9.8M305.40 372.3h9.8M325.20 372.3h9.8M345.00 372.3h9.8M364.80 372.3h9.8M384.60 372.3h9.8M404.40 372.3h9.8M424.20 372.3h9.8M444.00 372.3h9.8M463.80 372.3h9.8M483.60 372.3h9.8M503.40 372.3h9.8M523.20 372.3h9.8M166.4 96.60v10.3M166.4 115.50v10.3M166.4 134.40v10.3M166.4 153.30v10.3M166.4 172.20v10.3M166.4 191.10v10.3M166.4 210.00v10.3M166.4 228.90v10.3M166.4 247.80v10.3M166.4 266.70v10.3M166.4 285.60v10.3M166.4 304.50v10.3M166.4 323.40v10.3M166.4 342.30v10.3M554.3 96.60v10.3M554.3 115.50v10.3M554.3 134.40v10.3M554.3 153.30v10.3M554.3 172.20v10.3M554.3 191.10v10.3M554.3 210.00v10.3M554.3 228.90v10.3M554.3 247.80v10.3M554.3 266.70v10.3M554.3 285.60v10.3M554.3 304.50v10.3M554.3 323.40v10.3M554.3 342.30v10.3" stroke="#8a8a8a" stroke-width="0.8"/><rect x="197.3" y="120" width="117.6" height="48.9" stroke="#6a6a6a" stroke-width="0.6"/><path d="M202 127.5h107v3.5h-107zM202.5 132h106.5v32h-106.5zM204 164.8h6M300 164.8h6M207.5 127.5v-1.5h2v1.5M231 127.5v-2h2.5v2M275 127.5v-2h2.5v2M305.5 131v2" stroke="#555" stroke-width="0.5"/><rect x="334.6" y="120" width="116.1" height="48.9" stroke="#6a6a6a" stroke-width="0.6"/><path d="M340.5 127.5h106.5v3.5h-106.5zM338.5 132h107.5v31h-107.5zM341 164.5h6M431 164.5h6M363 127.5v-2h2.5v2M391 127.5v-2h3v2" stroke="#555" stroke-width="0.5"/><circle cx="358.3" cy="148" r="10" stroke="#444" stroke-width="0.8"/><circle cx="358.3" cy="148" r="8.3" stroke="#555" stroke-width="0.5"/><circle cx="358.3" cy="148" r="6.6" stroke="#555" stroke-width="0.55"/><circle cx="358.3" cy="148" r="4.9" stroke="#555" stroke-width="0.55"/><circle cx="358.3" cy="148" r="3.2" stroke="#555" stroke-width="0.55"/><circle cx="358.3" cy="148" r="1.6" fill="#666" stroke="none"/><path d="M348.3 148h20M358.3 138v20M351.3 141l14 14M365.3 141l-14 14" stroke="#555" stroke-width="0.4"/><circle cx="384" cy="148" r="6" stroke="#555" stroke-width="0.6"/><rect x="376.9" y="140.9" width="1.2" height="1.2" fill="#666" stroke="none"/><rect x="376.9" y="153.9" width="1.2" height="1.2" fill="#666" stroke="none"/><rect x="389.9" y="140.9" width="1.2" height="1.2" fill="#666" stroke="none"/><rect x="389.9" y="153.9" width="1.2" height="1.2" fill="#666" stroke="none"/><circle cx="408.6" cy="148" r="6" stroke="#555" stroke-width="0.6"/><rect x="401.5" y="140.9" width="1.2" height="1.2" fill="#666" stroke="none"/><rect x="401.5" y="153.9" width="1.2" height="1.2" fill="#666" stroke="none"/><rect x="414.5" y="140.9" width="1.2" height="1.2" fill="#666" stroke="none"/><rect x="414.5" y="153.9" width="1.2" height="1.2" fill="#666" stroke="none"/><path d="M405.0 144.5v7M406.8 143v10M408.6 142.5v11M410.40000000000003 143v10M412.20000000000005 144.5v7M403.1 148h11" stroke="#606060" stroke-width="0.6"/><circle cx="433.8" cy="148" r="6" stroke="#555" stroke-width="0.6"/><rect x="426.7" y="140.9" width="1.2" height="1.2" fill="#666" stroke="none"/><rect x="426.7" y="153.9" width="1.2" height="1.2" fill="#666" stroke="none"/><rect x="439.7" y="140.9" width="1.2" height="1.2" fill="#666" stroke="none"/><rect x="439.7" y="153.9" width="1.2" height="1.2" fill="#666" stroke="none"/><path d="M430.2 144.5v7M432.0 143v10M433.8 142.5v11M435.6 143v10M437.40000000000003 144.5v7M428.3 148h11" stroke="#606060" stroke-width="0.6"/><rect x="197" y="196.3" width="117.3" height="118" stroke="#6a6a6a" stroke-width="0.6"/><rect x="201.5" y="202" width="107.5" height="107" stroke="#555" stroke-width="0.5"/><path d="M205 202v-1h8v1M295 202v-1h8v1M309 205h1.5v7h-1.5M309 300h1.5v7h-1.5M309.5 220v70" stroke="#666" stroke-width="0.5"/><circle cx="232.7" cy="226.4" r="1.9" stroke="#3a3a3a" stroke-width="0.75"/><circle cx="276.5" cy="226.4" r="1.9" stroke="#3a3a3a" stroke-width="0.75"/><circle cx="232.7" cy="255.8" r="1.9" stroke="#3a3a3a" stroke-width="0.75"/><circle cx="276.5" cy="255.8" r="1.9" stroke="#3a3a3a" stroke-width="0.75"/><circle cx="210.3" cy="256" r="1.3" stroke="#3a3a3a" stroke-width="0.6"/><path d="M210.3 257.3v2.8" stroke="#3a3a3a" stroke-width="0.9"/><path d="M208.5 285.6v2.4M212.2 285.6v2.4M215.9 285.6v2.4M219.6 285.6v2.4M223.3 285.6v2.4M227.0 285.6v2.4M230.7 285.6v2.4M234.4 285.6v2.4M238.1 285.6v2.4M241.8 285.6v2.4M245.5 285.6v2.4M249.2 285.6v2.4M252.9 285.6v2.4M256.6 285.6v2.4M260.3 285.6v2.4M264.0 285.6v2.4M267.7 285.6v2.4M271.4 285.6v2.4M275.1 285.6v2.4M278.8 285.6v2.4M282.5 285.6v2.4M286.2 285.6v2.4M289.9 285.6v2.4M293.6 285.6v2.4M297.3 285.6v2.4M301.0 285.6v2.4M208.5 288.9v2.4M212.2 288.9v2.4M215.9 288.9v2.4M219.6 288.9v2.4M223.3 288.9v2.4M227.0 288.9v2.4M230.7 288.9v2.4M234.4 288.9v2.4M238.1 288.9v2.4M241.8 288.9v2.4M245.5 288.9v2.4M249.2 288.9v2.4M252.9 288.9v2.4M256.6 288.9v2.4M260.3 288.9v2.4M264.0 288.9v2.4M267.7 288.9v2.4M271.4 288.9v2.4M275.1 288.9v2.4M278.8 288.9v2.4M282.5 288.9v2.4M286.2 288.9v2.4M289.9 288.9v2.4M293.6 288.9v2.4M297.3 288.9v2.4M301.0 288.9v2.4M208.5 292.2v2.4M212.2 292.2v2.4M215.9 292.2v2.4M219.6 292.2v2.4M223.3 292.2v2.4M227.0 292.2v2.4M230.7 292.2v2.4M234.4 292.2v2.4M238.1 292.2v2.4M241.8 292.2v2.4M245.5 292.2v2.4M249.2 292.2v2.4M252.9 292.2v2.4M256.6 292.2v2.4M260.3 292.2v2.4M264.0 292.2v2.4M267.7 292.2v2.4M271.4 292.2v2.4M275.1 292.2v2.4M278.8 292.2v2.4M282.5 292.2v2.4M286.2 292.2v2.4M289.9 292.2v2.4M293.6 292.2v2.4M297.3 292.2v2.4M301.0 292.2v2.4" stroke="#5a5a5a" stroke-width="1.5"/><path d="M339.7 260.6 L339.7 289.1 L413.3 330.4 L486.3 287.1 L486.3 258.6 M413.3 302.9V330.4" stroke="#b4b4b4" stroke-width="0.55"/><path d="M339.7 264.6 L413.8 305.9 L486.3 262.6" stroke="#d2d2d2" stroke-width="0.45"/><path d="M414.5 222V251M414.5 251L366 277.5M414.5 251L461 275" stroke="#8a8a8a" stroke-width="0.5"/><path d="M416.1 218.7 L342.0 259.6 L413.8 299.6 L486.0 257.6Z" stroke="#3c3c3c" stroke-width="3.0" stroke-linejoin="round"/><path d="M416.1 218.7 L342.0 259.6 L413.8 299.6 L486.0 257.6Z" stroke="#c9c9c9" stroke-width="1.0" stroke-linejoin="round"/><path d="M416.1 221.0 L346.0 259.6 L413.8 297.3 L482.0 257.6Z" stroke="#a0a0a0" stroke-width="0.45"/><path d="M413 216.5h5l1 3h-5z" fill="#555"/><path d="M484 256h4.5l0.5 3h-4.5z" fill="#555"/><path d="M413.8 254.5V283M391 271.3H437" stroke="#7cc4bd" stroke-width="0.45"/><path d="M401.20 287.80l2.3 1.28M404.20 289.47l2.3 1.28M404.39 286.07l2.3 1.28M407.39 287.74l2.3 1.28M407.59 284.34l2.3 1.28M410.59 286.01l2.3 1.28M410.78 282.61l2.3 1.28M413.78 284.28l2.3 1.28M413.98 280.88l2.3 1.28M416.98 282.55l2.3 1.28M417.17 279.15l2.3 1.28M420.17 280.82l2.3 1.28M420.36 277.42l2.3 1.28M423.36 279.09l2.3 1.28M423.56 275.69l2.3 1.28M426.56 277.36l2.3 1.28M426.75 273.96l2.3 1.28M429.75 275.63l2.3 1.28M429.95 272.24l2.3 1.28M432.95 273.91l2.3 1.28M433.14 270.51l2.3 1.28M436.14 272.18l2.3 1.28M436.34 268.78l2.3 1.28M439.34 270.45l2.3 1.28M439.53 267.05l2.3 1.28M442.53 268.72l2.3 1.28M442.72 265.32l2.3 1.28M445.72 266.99l2.3 1.28M445.92 263.59l2.3 1.28M448.92 265.26l2.3 1.28M449.11 261.86l2.3 1.28M452.11 263.53l2.3 1.28M452.31 260.13l2.3 1.28M455.31 261.80l2.3 1.28M455.50 258.40l2.3 1.28M458.50 260.07l2.3 1.28" stroke="#5a5a5a" stroke-width="1.7"/><path d="M456.5 246.0v2.4M460.0 247.9v2.4M463.5 249.9v2.4M467.0 251.8v2.4M470.5 253.8v2.4M474.0 255.8v2.4M477.5 257.7v2.4M481.0 259.6v2.4M456.5 249.6v2.4M460.0 251.5v2.4M463.5 253.5v2.4M467.0 255.4v2.4M470.5 257.4v2.4M474.0 259.4v2.4M477.5 261.3v2.4M481.0 263.2v2.4M456.5 253.2v2.4M460.0 255.1v2.4M463.5 257.1v2.4M467.0 259.1v2.4M470.5 261.0v2.4M474.0 262.9v2.4M477.5 264.9v2.4M481.0 266.8v2.4M456.5 256.8v2.4M460.0 258.8v2.4M463.5 260.7v2.4M467.0 262.7v2.4M470.5 264.6v2.4M474.0 266.6v2.4M477.5 268.5v2.4M481.0 270.4v2.4M456.5 260.4v2.4M460.0 262.3v2.4M463.5 264.3v2.4M467.0 266.2v2.4M470.5 268.2v2.4M474.0 270.1v2.4M477.5 272.1v2.4M481.0 274.0v2.4" stroke="#4a4a4a" stroke-width="1.1"/><path d="M373.6 251v4M375.4 251v4M373.2 251.8h2.6M373.2 253.2h2.6" stroke="#505050" stroke-width="0.55"/><path d="M396.6 264.5v4M398.4 264.5v4M396.2 265.3h2.6M396.2 266.7h2.6" stroke="#505050" stroke-width="0.55"/><path d="M404.6 235v4M406.4 235v4M404.2 235.8h2.6M404.2 237.2h2.6" stroke="#505050" stroke-width="0.55"/><path d="M424.6 246v4M426.4 246v4M424.2 246.8h2.6M424.2 248.2h2.6" stroke="#505050" stroke-width="0.55"/><path d="M405 227.5a1.6 2.6 0 1 0 0.1 0zM404.5 240a1.6 2.6 0 1 0 0.1 0z" stroke="#777" stroke-width="0.5"/><ellipse cx="413.8" cy="252.3" rx="2.6" ry="1.612" stroke="#666" stroke-width="0.55"/><ellipse cx="472.5" cy="288" rx="2.6" ry="1.612" stroke="#666" stroke-width="0.55"/><ellipse cx="413.4" cy="322.5" rx="2.6" ry="1.612" stroke="#666" stroke-width="0.55"/><path d="M366.5 287.5l5 2.7v6.5l-5-2.7z" stroke="#b0b0b0" stroke-width="0.5"/><path d="M367.5 289.7l3 1.6v3.5l-3-1.6z" stroke="#c4c4c4" stroke-width="0.45"/><path d="M385 297l5 2.7v6.5l-5-2.7z" stroke="#b0b0b0" stroke-width="0.5"/><path d="M386 299.2l3 1.6v3.5l-3-1.6z" stroke="#c4c4c4" stroke-width="0.45"/><path d="M403.5 306.5l5 2.7v6.5l-5-2.7z" stroke="#b0b0b0" stroke-width="0.5"/><path d="M404.5 308.7l3 1.6v3.5l-3-1.6z" stroke="#c4c4c4" stroke-width="0.45"/><circle cx="349.5" cy="280" r="3.2" stroke="#a0a0a0" stroke-width="0.55"/><circle cx="349.5" cy="280" r="1.8" stroke="#b0b0b0" stroke-width="0.45"/><circle cx="354.5" cy="287.5" r="2.8" stroke="#a0a0a0" stroke-width="0.55"/><path d="M381 276.5l3 2.2M381.5 278.8l2-2.5" stroke="#333" stroke-width="0.9"/><path d="M256.7 143.8L413.8 271.3" stroke="#a0a0a0" stroke-width="0.45"/><path d="M166.4 306V351M166.4 349.2H194M166.4 324.4h12.2l2.7 3.5v21.3" stroke="#8c8c8c" stroke-width="0.6"/><path d="M178.6 324.4l0.6 3.5h2.1" stroke="#888" stroke-width="0.5"/></g><text x="162" y="313.5" font-size="4" fill="#9a9a9a" font-family="Liberation Sans" style="filter:blur(0.01px)">Y</text><text x="167.6" y="346.3" font-size="5.6" fill="#777" font-family="Liberation Sans" style="filter:blur(0.01px)">W</text><text x="197.5" y="351" font-size="4" fill="#b0b0b0" font-family="Liberation Sans" style="filter:blur(0.01px)">X</text></svg>
<div class="a" style="left:312px;top:367.7px;width:21.5px;height:5.5px;background:#606060;"></div>
<div class="t" style="left:314px;top:369.60px;font-size:3.2px;line-height:3.2px;color:#e6e6e6;font-weight:normal;font-family:'Liberation Mono',monospace;">_-Viewbase</div>
<div class="a" style="left:312px;top:374.2px;width:42.5px;height:4.7px;background:#5c5c5c;"></div>
<div class="t" style="left:313px;top:375.80px;font-size:3.2px;line-height:3.2px;color:#e6e6e6;font-weight:normal;font-family:'Liberation Mono',monospace;">Select drawing view:</div>
<div class="a" style="left:312px;top:380.9px;width:96px;height:9.3px;background:#3e3e3f;"></div>
<div class="t" style="left:313.5px;top:383.10px;font-size:3.3px;line-height:3.3px;color:#e8e8e8;font-weight:normal;font-family:'Liberation Mono',monospace;">Select position for projected view</div>
<div class="a" style="left:313.5px;top:386.2px;width:39.5px;height:3.6px;background:#5e5e5f;"></div>
<div class="a" style="left:355.3px;top:386.2px;width:13.9px;height:3.6px;background:#5e5e5f;"></div>
<div class="t" style="left:314.5px;top:387.30px;font-size:3.1px;line-height:3.1px;color:#f2f2f2;font-weight:normal;font-family:'Liberation Mono',monospace;">Isometric projection</div>
<div class="t" style="left:357.5px;top:387.30px;font-size:3.1px;line-height:3.1px;color:#f2f2f2;font-weight:normal;font-family:'Liberation Mono',monospace;">Exit</div>
<svg width="711" height="400"><path d="M403 385.5l1.5-1.8 1.5 1.8z" fill="#ddd"/></svg>
<div class="a" style="left:332.9px;top:361.9px;width:64.7px;height:17.4px;background:#121212;border-radius:1.2px"></div>
<svg width="711" height="400"><circle cx="339.8" cy="371" r="1.7" fill="none" stroke="#c8c8c8" stroke-width="0.6"/><path d="M339.8 369.8v1.2l0.9 0.6" stroke="#c8c8c8" stroke-width="0.45" fill="none"/></svg>
<div class="a" style="left:346.8px;top:366.2px;width:8.5px;height:9.3px;background:#ececec;border-radius:0.5px"></div>
<div class="t" style="left:251px;width:200px;text-align:center;top:370.40px;font-size:2.2px;line-height:2.2px;color:#444;font-weight:normal;">Def</div>
<div class="a" style="left:358.3px;top:364.5px;width:0.4px;height:13px;background:#3a3a3a;"></div>
<div class="a" style="left:360.7px;top:363.9px;width:11.6px;height:14.7px;background:#0b0b0b;border:0.6px solid #6577ad;border-radius:0.6px"></div>
<div class="a" style="left:363.8px;top:368px;width:1px;height:4.2px;background:#eeeeee;"></div>
<div class="a" style="left:366px;top:368px;width:3.4px;height:4.2px;background:#eeeeee;"></div>
<div class="a" style="left:365px;top:373.8px;width:3.2px;height:0.6px;background:#bbb;"></div>
<div class="a" style="left:375.4px;top:368px;width:1px;height:4.2px;background:#dddddd;"></div>
<div class="a" style="left:377.6px;top:368px;width:3.4px;height:4.2px;background:#dddddd;"></div>
<div class="a" style="left:376.6px;top:373.8px;width:3.2px;height:0.6px;background:#aaa;"></div>
<div class="a" style="left:390.3px;top:370.4px;width:1.3px;height:1.3px;background:#bbb;"></div>
<div class="a" style="left:4px;top:394.5px;width:2.5px;height:3px;background:#3a3d40;"></div>
<div class="a" style="left:11.5px;top:394.3px;width:3px;height:3.6px;border:0.5px solid #aaa;"></div>
<div class="t" style="left:17px;top:395.40px;font-size:3.0px;line-height:3.0px;color:#c8c8c8;font-weight:normal;">Model</div>
<div class="a" style="left:28.5px;top:392.8px;width:13px;height:6.5px;background:#3b3e42;"></div>
<div class="t" style="left:30px;top:395.40px;font-size:3.0px;line-height:3.0px;color:#e4e4e4;font-weight:normal;">Layout1</div>
<div class="t" style="left:44px;top:395.40px;font-size:3.0px;line-height:3.0px;color:#bdbdbd;font-weight:normal;">Layout2</div>
<div class="t" style="left:-39.5px;width:200px;text-align:center;top:395.40px;font-size:3.6px;line-height:3.6px;color:#ccc;font-weight:normal;">+</div>
<div class="t" style="left:384.4px;top:395.40px;font-size:2.9px;line-height:2.9px;color:#c8c8c8;font-weight:normal;">168.61, 63.16, 0</div>
<div class="a" style="left:412.8px;top:394.2px;width:4px;height:3.6px;border:0.5px solid #aaa;"></div>
<div class="t" style="left:418.8px;top:395.40px;font-size:2.9px;line-height:2.9px;color:#c8c8c8;font-weight:normal;">Paperspace</div>
<div class="t" style="left:336px;width:200px;text-align:center;top:395.70px;font-size:2.4px;line-height:2.4px;color:#888;font-weight:normal;">▾</div>
<div class="a" style="left:445px;top:395px;width:2.2px;height:2.2px;background:#4a4d50;"></div>
<div class="a" style="left:449px;top:395px;width:2.2px;height:2.2px;background:#4a4d50;"></div>
<div class="a" style="left:459.5px;top:394.8px;width:2.6px;height:2.8px;background:#8a8d90;"></div>
<div class="t" style="left:463.5px;top:396.40px;font-size:2.6px;line-height:2.6px;color:#bfc0c2;font-weight:normal;">GRID</div>
<div class="a" style="left:474.5px;top:394.8px;width:2.6px;height:2.8px;background:#8a8d90;"></div>
<div class="t" style="left:478.5px;top:396.40px;font-size:2.6px;line-height:2.6px;color:#bfc0c2;font-weight:normal;">SNAP</div>
<div class="a" style="left:495px;top:394.8px;width:2.6px;height:2.8px;background:#8a8d90;"></div>
<div class="t" style="left:499px;top:396.40px;font-size:2.6px;line-height:2.6px;color:#bfc0c2;font-weight:normal;">ORTHO</div>
<div class="a" style="left:512px;top:392.8px;width:103px;height:6.6px;background:#19213a;border:0.5px solid #2b4276;border-radius:0.8px"></div>
<div class="a" style="left:513.5px;top:394.8px;width:2.2px;height:2.6px;background:#7f9ad0;"></div>
<div class="t" style="left:517px;top:396.40px;font-size:2.7px;line-height:2.7px;color:#c5cfe6;font-weight:normal;">POLAR</div>
<div class="t" style="left:433px;width:200px;text-align:center;top:395.70px;font-size:2.3px;line-height:2.3px;color:#7f8fb0;font-weight:normal;">▾</div>
<div class="a" style="left:535px;top:393.5px;width:0.4px;height:5px;background:#2b4276;"></div>
<div class="a" style="left:536.5px;top:394.8px;width:2.2px;height:2.6px;background:#7f9ad0;"></div>
<div class="t" style="left:540px;top:396.40px;font-size:2.7px;line-height:2.7px;color:#c5cfe6;font-weight:normal;">STRACK</div>
<div class="t" style="left:455px;width:200px;text-align:center;top:395.70px;font-size:2.3px;line-height:2.3px;color:#7f8fb0;font-weight:normal;">▾</div>
<div class="a" style="left:557px;top:393.5px;width:0.4px;height:5px;background:#2b4276;"></div>
<div class="a" style="left:558.5px;top:394.8px;width:2.2px;height:2.6px;background:#7f9ad0;"></div>
<div class="t" style="left:562px;top:396.40px;font-size:2.7px;line-height:2.7px;color:#c5cfe6;font-weight:normal;">ESNAP</div>
<div class="t" style="left:476px;width:200px;text-align:center;top:395.70px;font-size:2.3px;line-height:2.3px;color:#7f8fb0;font-weight:normal;">▾</div>
<div class="a" style="left:578px;top:393.5px;width:0.4px;height:5px;background:#2b4276;"></div>
<div class="a" style="left:579.5px;top:394.8px;width:2.2px;height:2.6px;background:#7f9ad0;"></div>
<div class="t" style="left:583px;top:396.40px;font-size:2.7px;line-height:2.7px;color:#c5cfe6;font-weight:normal;">LWT</div>
<div class="t" style="left:494px;width:200px;text-align:center;top:395.70px;font-size:2.3px;line-height:2.3px;color:#7f8fb0;font-weight:normal;">▾</div>
<div class="a" style="left:596px;top:393.5px;width:0.4px;height:5px;background:#2b4276;"></div>
<div class="a" style="left:597.5px;top:394.8px;width:2.2px;height:2.6px;background:#7f9ad0;"></div>
<div class="t" style="left:601px;top:396.40px;font-size:2.7px;line-height:2.7px;color:#c5cfe6;font-weight:normal;">DUCS</div>
<div class="t" style="left:513px;width:200px;text-align:center;top:395.70px;font-size:2.3px;line-height:2.3px;color:#7f8fb0;font-weight:normal;">▾</div>
<div class="a" style="left:615px;top:393.5px;width:0.4px;height:5px;background:#2b4276;"></div>
<div class="a" style="left:617.5px;top:394.8px;width:2.2px;height:2.8px;background:#8a8d90;"></div>
<div class="t" style="left:621.5px;top:396.40px;font-size:2.6px;line-height:2.6px;color:#bfc0c2;font-weight:normal;">HKA</div>
<div class="a" style="left:632.5px;top:394.3px;width:3.2px;height:3.2px;border:0.5px solid #aaa;"></div>
<div class="t" style="left:637px;top:395.40px;font-size:2.8px;line-height:2.8px;color:#c8c8c8;font-weight:normal;">Mechanical</div>
<div class="t" style="left:557px;width:200px;text-align:center;top:395.70px;font-size:2.4px;line-height:2.4px;color:#888;font-weight:normal;">▾</div>
<svg width="711" height="400"><circle cx="665" cy="396" r="1.6" fill="none" stroke="#bbb" stroke-width="0.5"/></svg>
<div class="t" style="left:668px;top:395.40px;font-size:2.8px;line-height:2.8px;color:#c8c8c8;font-weight:normal;">PUBLISH</div>
<div class="t" style="left:586px;width:200px;text-align:center;top:395.70px;font-size:2.4px;line-height:2.4px;color:#888;font-weight:normal;">▾</div>
<svg width="711" height="400"><circle cx="691.3" cy="396" r="2.1" fill="#e8d38a"/></svg>
<div class="t" style="left:606px;width:200px;text-align:center;top:395.40px;font-size:3.4px;line-height:3.4px;color:#bbb;font-weight:normal;">⋮</div>
</body></html>
